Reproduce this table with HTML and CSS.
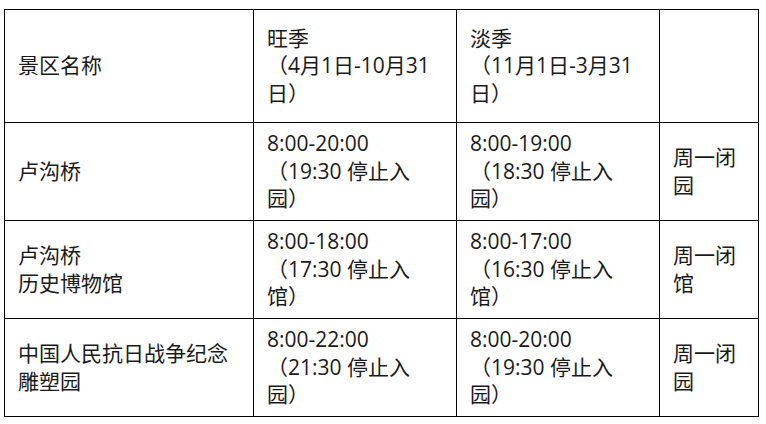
FILE: index.html
```html
<!DOCTYPE html>
<html lang="zh-CN">
<head>
<meta charset="utf-8">
<title>开放时间</title>
<link rel="stylesheet" href="styles.css">
</head>
<body>
<div class="page">
  <table class="hours">
    <colgroup>
      <col class="c-name">
      <col class="c-peak">
      <col class="c-off">
      <col class="c-note">
    </colgroup>
    <tr class="head">
      <td>景区名称</td>
      <td>旺季<br>（4月1日-10月31<br>日）</td>
      <td>淡季<br>（11月1日-3月31<br>日）</td>
      <td></td>
    </tr>
    <tr>
      <td>卢沟桥</td>
      <td>8:00-20:00<br>（19:30 停止入<br>园）</td>
      <td>8:00-19:00<br>（18:30 停止入<br>园）</td>
      <td>周一闭<br>园</td>
    </tr>
    <tr>
      <td>卢沟桥<br>历史博物馆</td>
      <td>8:00-18:00<br>（17:30 停止入<br>馆）</td>
      <td>8:00-17:00<br>（16:30 停止入<br>馆）</td>
      <td>周一闭<br>馆</td>
    </tr>
    <tr>
      <td>中国人民抗日战争纪念<br>雕塑园</td>
      <td>8:00-22:00<br>（21:30 停止入<br>园）</td>
      <td>8:00-20:00<br>（19:30 停止入<br>园）</td>
      <td>周一闭<br>园</td>
    </tr>
  </table>
</div>
</body>
</html>
```
FILE: styles.css
```css
html, body {
  margin: 0;
  padding: 0;
  background: #fff;
}
.page {
  padding: 9px 0 0 4px;
}
.hours {
  border-collapse: collapse;
  table-layout: fixed;
  width: 754px;
  font-family: "Open Sans", "Noto Sans CJK SC", sans-serif;
  font-size: 21px;
  line-height: 27.5px;
  color: #1a1a1a;
}
.c-name { width: 249px; }
.c-peak { width: 203px; }
.c-off { width: 203px; }
.c-note { width: 99px; }
.hours td {
  border: 1px solid #000;
  padding: 0 13px;
  vertical-align: middle;
  height: 97px;
}
.hours tr.head td {
  height: 112px;
}
```
